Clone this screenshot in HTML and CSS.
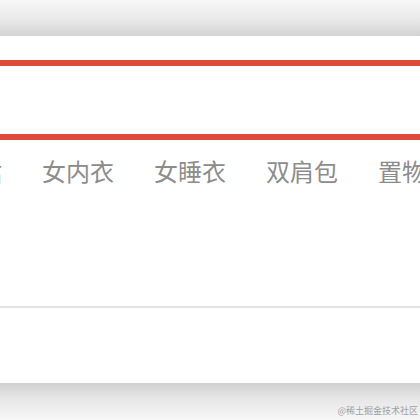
FILE: index.html
```html
<!DOCTYPE html>
<html lang="zh-CN">
<head>
<meta charset="utf-8">
<title>搜索</title>
<link rel="stylesheet" href="styles.css">
</head>
<body>
<div class="frame">
  <div class="shade-top"></div>
  <div class="panel">
    <div class="search"></div>
    <ul class="hot">
      <li>连衣裙</li>
      <li>女内衣</li>
      <li>女睡衣</li>
      <li>双肩包</li>
      <li>置物架</li>
    </ul>
    <div class="divider"></div>
  </div>
  <div class="shade-bottom">
    <span class="mark">@稀土掘金技术社区</span>
  </div>
</div>
</body>
</html>
```

FILE: styles.css
```css
html, body {
  margin: 0;
  padding: 0;
  background: #ffffff;
}
.frame {
  width: 420px;
  height: 420px;
  overflow: hidden;
  display: flex;
  flex-direction: column;
  font-family: "Noto Sans CJK SC", "Noto Sans", sans-serif;
}
.shade-top {
  height: 36px;
  flex: none;
  background: linear-gradient(to bottom, #f7f7f7 0%, #e9e9e9 55%, #d3d3d3 100%);
}
.panel {
  flex: none;
  height: 347px;
  background: #ffffff;
  display: flex;
  flex-direction: column;
}
.search {
  margin-top: 24px;
  height: 68px;
  border-top: 6px solid #e04a3a;
  border-bottom: 6px solid #e04a3a;
}
.hot {
  list-style: none;
  margin: 19px 0 0 -70px;
  padding: 0;
  display: flex;
  gap: 40px;
  white-space: nowrap;
  font-size: 24px;
  line-height: 24px;
  color: #8c8c8c;
}
.hot li {
  flex: none;
}
.divider {
  margin-top: 123px;
  height: 2px;
  background: #e3e3e3;
}
.shade-bottom {
  flex: 1;
  display: flex;
  justify-content: flex-end;
  align-items: flex-end;
  padding: 0 2px 3px 0;
  background: linear-gradient(to bottom, #d0d0d0 0%, #e6e6e6 40%, #f7f7f7 100%);
}
.mark {
  font-size: 9px;
  line-height: 12px;
  color: #a0a0a0;
  letter-spacing: 0;
}
```
